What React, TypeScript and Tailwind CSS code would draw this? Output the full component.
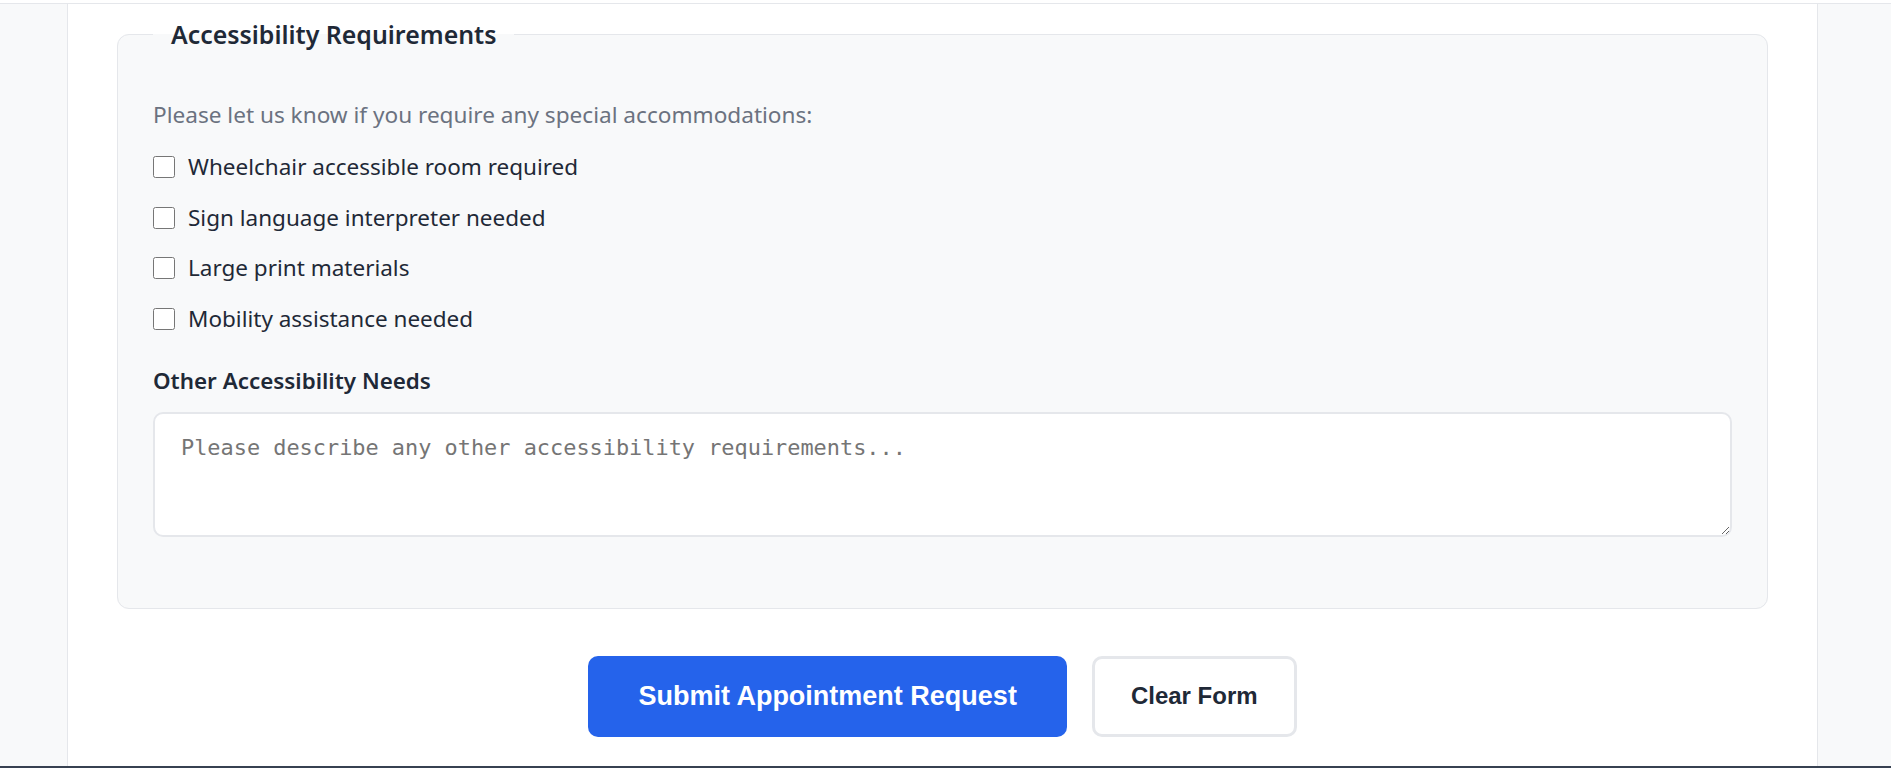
import React from 'react';

const needs = [
  'Wheelchair accessible room required',
  'Sign language interpreter needed',
  'Large print materials',
  'Mobility assistance needed',
];

export default function App() {
  return (
    <div className="h-[768px] overflow-hidden flex flex-col bg-[#f8f9fa] font-['Noto_Sans',sans-serif]">
      <div className="h-[3px] bg-white" />
      <div className="flex-1 flex border-t border-[#e5e7eb]">
        <div className="w-[68px] shrink-0 border-r border-[#e5e7eb]" />

        {/* main card */}
        <div className="w-[1750px] shrink-0 bg-white border-r border-[#e5e7eb] px-[49px] pt-[13px]">
          <fieldset className="border border-[#e5e7eb] rounded-[12px] bg-[#f8f9fa] px-[35px] pt-[48.5px] pb-[71px]">
            <legend className="px-[18px] text-[24.9px] leading-[34px] font-semibold text-[#1f2937]">
              Accessibility Requirements
            </legend>

            <p className="text-[22.6px] leading-[30px] text-[#6b7280]">
              Please let us know if you require any special accommodations:
            </p>

            <div className="mt-[22.4px] flex flex-col gap-[20.7px]">
              {needs.map((n) => (
                <label key={n} className="h-[30px] flex items-center gap-[13px] text-[22.5px] text-[#1f2937]">
                  <input type="checkbox" className="w-[22px] h-[22px] shrink-0" />
                  <span>{n}</span>
                </label>
              ))}
            </div>

            <div className="mt-[33px] text-[22.4px] leading-[28px] font-semibold text-[#1f2937]">
              Other Accessibility Needs
            </div>
            <textarea
              rows={3}
              placeholder="Please describe any other accessibility requirements..."
              className="mt-[17px] block w-full h-[125px] bg-white border-[2.5px] border-[#e5e7eb] rounded-[10px] px-[26px] pt-[18px] font-['DejaVu_Sans_Mono',monospace] text-[21.9px] placeholder:text-[#757575] outline-none"
            />
          </fieldset>

          {/* actions */}
          <div className="mt-[47px] flex justify-center gap-[25px] font-['Liberation_Sans',Arial,sans-serif] font-bold">
            <button className="h-[81px] px-[50px] rounded-[10px] bg-[#2563eb] text-white text-[27px]">
              Submit Appointment Request
            </button>
            <button className="h-[81px] px-[36px] rounded-[10px] bg-white border-[3px] border-[#e5e7eb] text-[#1f2937] text-[24px]">
              Clear Form
            </button>
          </div>
        </div>

        <div className="flex-1" />
      </div>
      <div className="h-[2px] bg-[#374151]" />
    </div>
  );
}
